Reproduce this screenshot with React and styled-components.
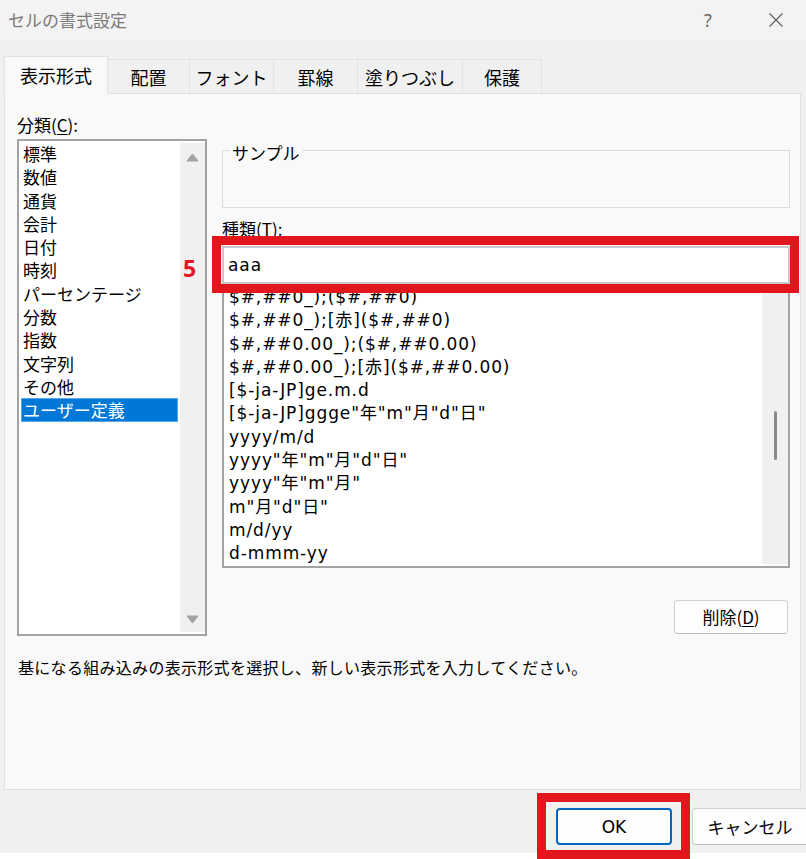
import React from 'react';
import styled, { createGlobalStyle } from 'styled-components';

const JP = `"Noto Sans CJK JP", "Noto Sans", sans-serif`;
const LAT = `"DejaVu Sans", "Noto Sans CJK JP", sans-serif`;
const RED = '#e2171e';

const GlobalStyle = createGlobalStyle`
  html, body { margin: 0; padding: 0; background: #ffffff; }
  body { font-family: ${JP}; color: #000; }
  * { box-sizing: border-box; }
`;

const Screen = styled.div`
  position: relative;
  width: 806px;
  height: 859px;
  overflow: hidden;
  background: #ffffff;
`;

const Dialog = styled.div`
  width: 806px;
  height: 853px;
  background: #f0f0f0;
  display: flex;
  flex-direction: column;
`;

const TitleBar = styled.div`
  height: 40px;
  background: #f3f3f3;
  display: flex;
  align-items: center;
  padding-left: 8px;
  padding-right: 7px;
`;

const Title = styled.div`
  flex: 1;
  font: 17px/22px ${JP};
  color: #7a7a7a;
`;

const TitleButtons = styled.div`
  display: flex;
  align-items: center;
  gap: 22px;
`;

const TitleButton = styled.div`
  width: 46px;
  height: 32px;
  display: flex;
  align-items: center;
  justify-content: center;
  font: 18px/22px "Noto Sans", sans-serif;
  color: #6a6a6a;
`;

const TabRow = styled.div`
  margin-top: 16px;
  height: 37px;
  padding-left: 4px;
  display: flex;
  align-items: flex-end;
`;

const Tab = styled.div`
  position: relative;
  width: ${p => p.$w}px;
  height: ${p => (p.$active ? 38 : 34)}px;
  margin-left: -1px;
  margin-bottom: ${p => (p.$active ? -1 : 0)}px;
  z-index: ${p => (p.$active ? 2 : 1)};
  display: flex;
  align-items: center;
  justify-content: center;
  padding-bottom: ${p => (p.$active ? 2 : 0)}px;
  background: ${p => (p.$active ? '#f9f9f9' : '#f0f0f0')};
  border: 1px solid #e2e2e2;
  border-bottom: none;
  font: 18px/22px ${JP};
  color: #000;
  &:first-child { margin-left: 0; }
`;

const Panel = styled.div`
  margin: 0 5px 0 4px;
  height: 697px;
  border: 1px solid #e0e0e0;
  background: #f9f9f9;
  padding: 17px 10px 0 12px;
  display: flex;
  flex-direction: column;
`;

const Columns = styled.div`
  display: grid;
  grid-template-columns: 190px 1fr;
  column-gap: 15px;
`;

const Column = styled.div`
  display: flex;
  flex-direction: column;
`;

const FieldLabel = styled.div`
  font: 17px/${p => p.$lh || 22}px ${JP};
  margin-top: ${p => p.$mt || 0}px;
  margin-bottom: ${p => p.$mb || 0}px;
  u { text-decoration: underline; text-underline-offset: 2px; }
`;

const ListBox = styled.div`
  display: flex;
  height: ${p => p.$h}px;
  border: 2px solid #a3a3a3;
  background: #ffffff;
  overflow: hidden;
`;

const Items = styled.div`
  flex: 1;
  min-width: 0;
  padding: ${p => p.$pad};
`;

const CatItem = styled.div`
  height: 23.3px;
  padding-left: 2px;
  font: 17px/23.3px ${JP};
  white-space: nowrap;
  color: ${p => (p.$sel ? '#ffffff' : '#000000')};
  background: ${p => (p.$sel ? '#0078d7' : 'transparent')};
  outline: ${p => (p.$sel ? '1px solid #5aa6e6' : 'none')};
  outline-offset: -1px;
`;

const FmtItem = styled.div`
  height: 23.3px;
  padding-left: 5px;
  font: 17px/23.3px ${LAT};
  letter-spacing: 0.9px;
  white-space: nowrap;
  color: #000;
`;

const ScrollTrack = styled.div`
  width: ${p => p.$w}px;
  margin: 2px 0;
  background: #f0f0f0;
  display: flex;
  flex-direction: column;
  align-items: center;
  justify-content: ${p => (p.$arrows ? 'space-between' : 'flex-start')};
  padding: ${p => (p.$arrows ? '10px 0 8px' : '0')};
`;

const Thumb = styled.div`
  width: 3px;
  height: 49px;
  margin-top: 123px;
  border-radius: 2px;
  background: #8a8a8a;
`;

const Arrow = ({ down }) => (
  <svg width="13" height="9" viewBox="0 0 13 9">
    <path
      d={down ? 'M1 1 L12 1 L6.5 8 Z' : 'M1 8 L12 8 L6.5 1 Z'}
      fill="#a3a3a3"
      stroke="#a3a3a3"
      strokeWidth="1"
      strokeLinejoin="round"
    />
  </svg>
);

const SampleBox = styled.div`
  position: relative;
  margin-top: 39px;
  height: 58px;
  border: 1px solid #dcdcdc;
`;

const Legend = styled.span`
  position: absolute;
  left: 7px;
  top: -8px;
  padding: 0 2px;
  background: #f9f9f9;
  font: 17px/20px ${JP};
`;

const InputWrap = styled.div`
  position: relative;
`;

const TextInput = styled.div`
  height: 38px;
  border: 2px solid #c8c8c8;
  background: #ffffff;
  padding-left: 4px;
  display: flex;
  align-items: center;
  font: 17px/22px ${LAT};
  letter-spacing: 0.9px;
`;

const RedFrame = styled.div`
  position: absolute;
  top: ${p => p.$t}px;
  left: ${p => p.$l}px;
  right: ${p => p.$r}px;
  bottom: ${p => p.$b}px;
  border: 9px solid ${RED};
  pointer-events: none;
  z-index: 5;
`;

const StepNo = styled.span`
  position: absolute;
  left: -39px;
  top: 7px;
  font: bold 23px/30px "Noto Sans", sans-serif;
  color: ${RED};
`;

const DeleteRow = styled.div`
  margin-top: 32px;
  display: flex;
  justify-content: flex-end;
  padding-right: 2px;
`;

const Button = styled.div`
  width: ${p => p.$w}px;
  height: ${p => p.$h}px;
  flex-shrink: 0;
  display: flex;
  align-items: center;
  justify-content: center;
  border-radius: 4px;
  background: #fdfdfd;
  border: ${p => (p.$primary ? '2px solid #0067c0' : '1px solid #d0d0d0')};
  border-bottom-color: ${p => (p.$primary ? '#0067c0' : '#bdbdbd')};
  font: 17px/22px ${p => (p.$latin ? LAT : JP)};
  color: #000;
  u { text-decoration: underline; text-underline-offset: 2px; }
`;

const Description = styled.div`
  margin-top: 20px;
  font: 16px/22px ${JP};
  letter-spacing: 0.3px;
  padding-left: 1px;
`;

const FooterRow = styled.div`
  margin-top: 18px;
  display: flex;
  justify-content: flex-end;
  gap: 20px;
  margin-right: -2px;
`;

const Highlight = styled.div`
  position: relative;
`;

const categories = [
  '標準', '数値', '通貨', '会計', '日付', '時刻', 'パーセンテージ',
  '分数', '指数', '文字列', 'その他', 'ユーザー定義',
];

const formats = [
  '$#,##0_);($#,##0)',
  '$#,##0_);[赤]($#,##0)',
  '$#,##0.00_);($#,##0.00)',
  '$#,##0.00_);[赤]($#,##0.00)',
  '[$-ja-JP]ge.m.d',
  '[$-ja-JP]ggge"年"m"月"d"日"',
  'yyyy/m/d',
  'yyyy"年"m"月"d"日"',
  'yyyy"年"m"月"',
  'm"月"d"日"',
  'm/d/yy',
  'd-mmm-yy',
];

const tabs = [
  { label: '表示形式', w: 104, active: true },
  { label: '配置', w: 83 },
  { label: 'フォント', w: 85 },
  { label: '罫線', w: 85 },
  { label: '塗りつぶし', w: 106 },
  { label: '保護', w: 80 },
];

export default function App() {
  return (
    <Screen>
      <GlobalStyle />
      <Dialog>
        <TitleBar>
          <Title>セルの書式設定</Title>
          <TitleButtons>
            <TitleButton>?</TitleButton>
            <TitleButton>
              <svg width="16" height="16" viewBox="0 0 16 16">
                <path d="M1.5 1.5 L14.5 14.5 M14.5 1.5 L1.5 14.5" stroke="#5f5f5f" strokeWidth="1.1" fill="none" />
              </svg>
            </TitleButton>
          </TitleButtons>
        </TitleBar>

        <TabRow>
          {tabs.map(t => (
            <Tab key={t.label} $w={t.w} $active={t.active}>{t.label}</Tab>
          ))}
        </TabRow>

        <Panel>
          <Columns>
            <Column>
              <FieldLabel $lh={28}>分類(<u>C</u>):</FieldLabel>
              <ListBox $h={497}>
                <Items $pad="1px 2px 0 2px">
                  {categories.map((c, i) => (
                    <CatItem key={c} $sel={i === categories.length - 1}>{c}</CatItem>
                  ))}
                </Items>
                <ScrollTrack $w={25} $arrows>
                  <Arrow />
                  <Arrow down />
                </ScrollTrack>
              </ListBox>
            </Column>

            <Column>
              <SampleBox>
                <Legend>サンプル</Legend>
              </SampleBox>
              <FieldLabel $mt={10} $mb={6}>種類(<u>T</u>):</FieldLabel>
              <InputWrap>
                <TextInput>aaa</TextInput>
                <RedFrame $t={-10} $l={-10} $r={-9} $b={-9} />
                <StepNo>5</StepNo>
              </InputWrap>
              <ListBox $h={284}>
                <Items $pad="0">
                  {formats.map(f => (
                    <FmtItem key={f}>{f}</FmtItem>
                  ))}
                </Items>
                <ScrollTrack $w={26}>
                  <Thumb />
                </ScrollTrack>
              </ListBox>
              <DeleteRow>
                <Button $w={114} $h={34}>削除(<u>D</u>)</Button>
              </DeleteRow>
            </Column>
          </Columns>
          <Description>基になる組み込みの表示形式を選択し、新しい表示形式を入力してください。</Description>
        </Panel>

        <FooterRow>
          <Highlight>
            <Button $w={116} $h={37} $primary $latin>OK</Button>
            <RedFrame $t={-15} $l={-19} $r={-18} $b={-14} />
          </Highlight>
          <Button $w={116} $h={37}>キャンセル</Button>
        </FooterRow>
      </Dialog>
    </Screen>
  );
}
